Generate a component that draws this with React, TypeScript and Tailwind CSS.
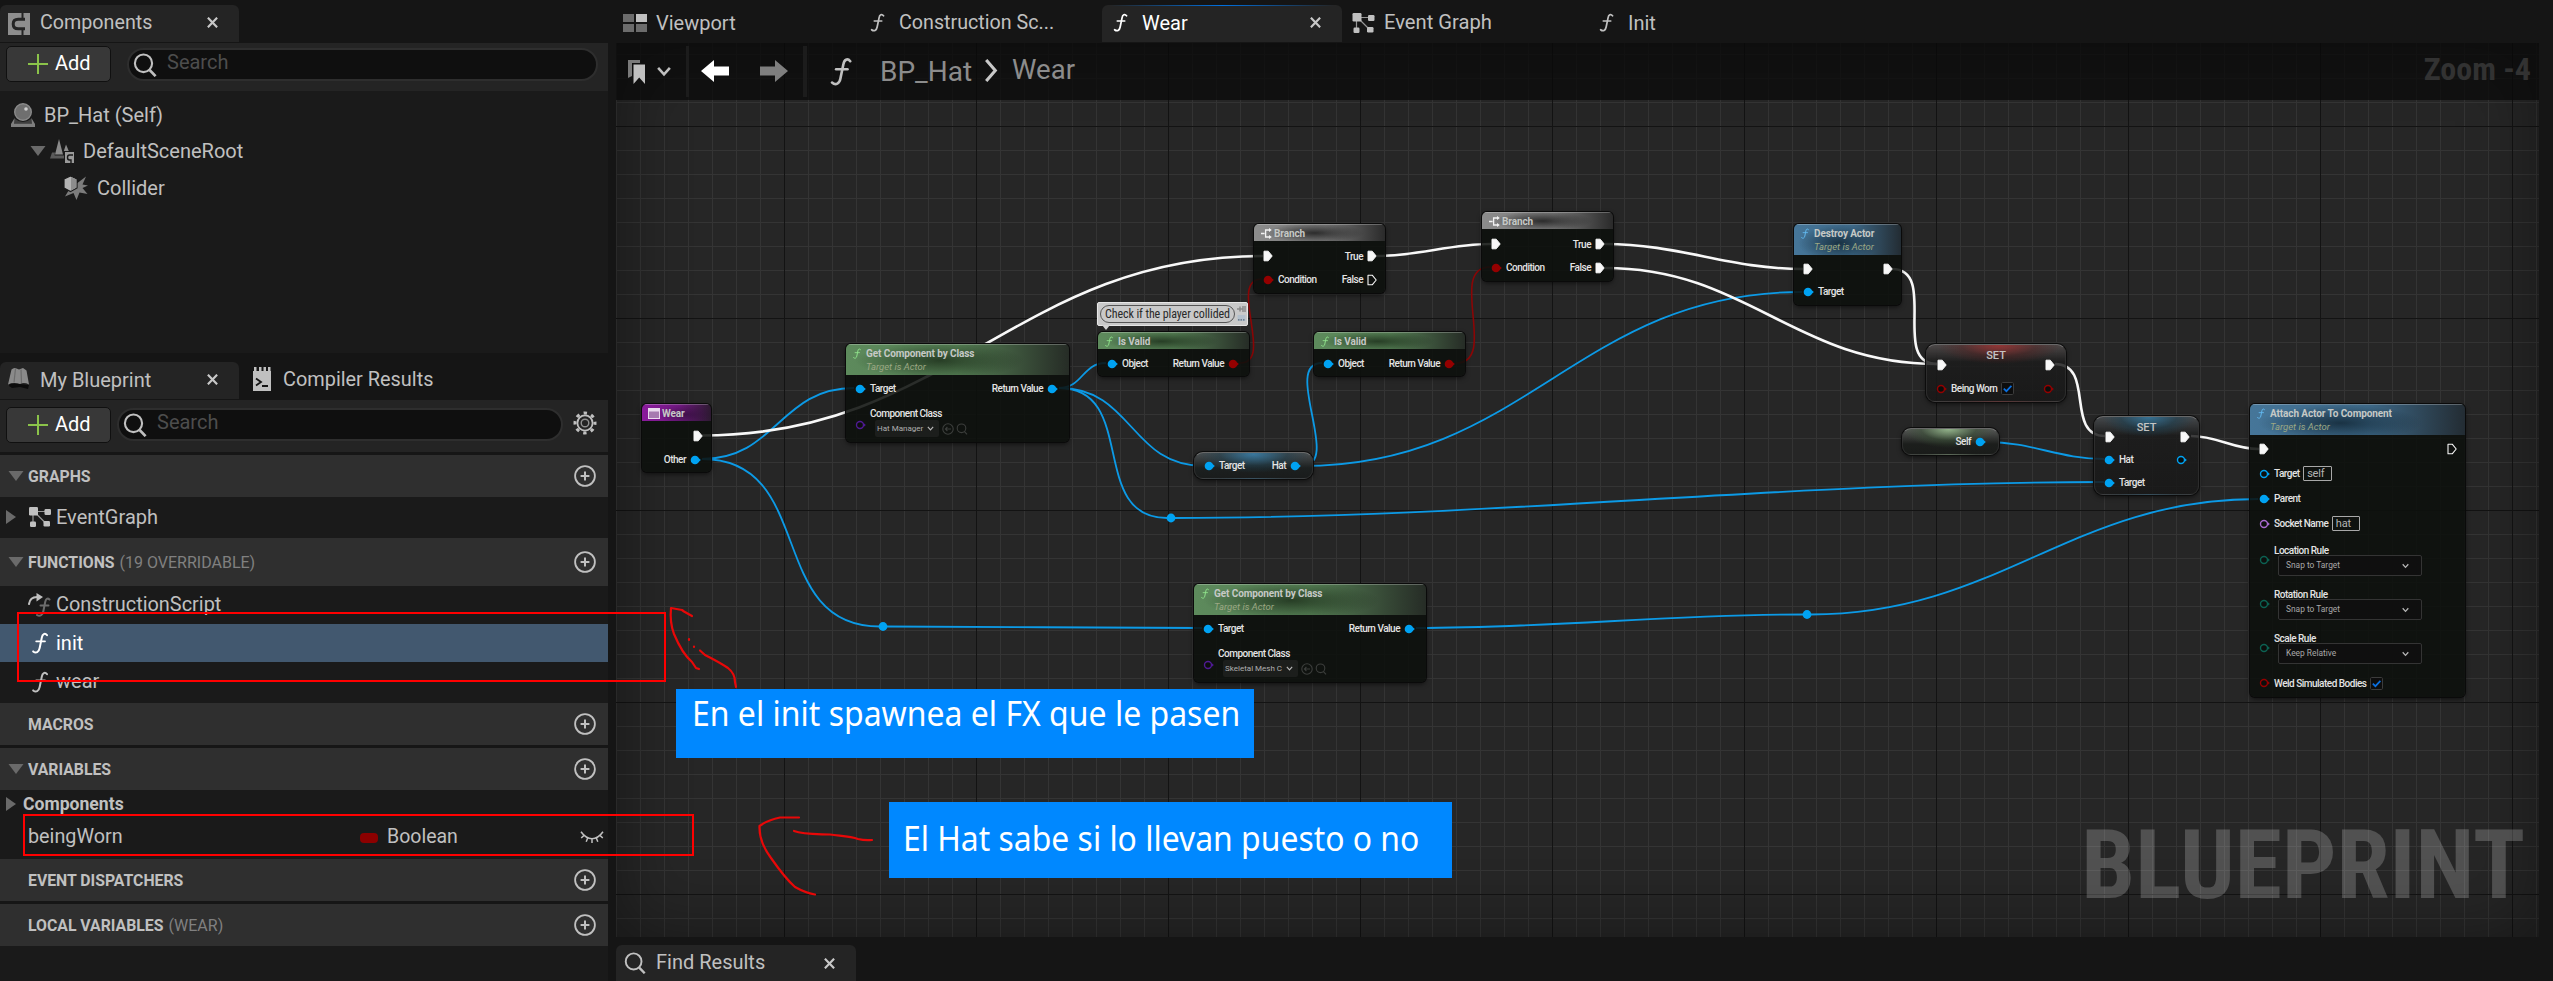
import type { ReactNode } from "react";

/* ---------- icons ---------- */

function FuncIcon({ className = "" }: { className?: string }) {
  return (
    <svg viewBox="0 0 16 22" className={className} fill="none" stroke="currentColor" strokeLinecap="round">
      <path d="M15 3.2C12.9 0.6 10.4 2 9.8 5.6L7.6 16.2C6.9 20.2 4 21.8 1.2 19.4" strokeWidth="2" />
      <path d="M4.2 9.3H13" strokeWidth="1.8" />
    </svg>
  );
}

function SearchIcon({ className = "" }: { className?: string }) {
  return (
    <svg viewBox="0 0 24 24" className={className} fill="none" stroke="currentColor" strokeWidth="2.1">
      <ellipse cx="10.5" cy="10.3" rx="8.6" ry="8.8" />
      <path d="M16.6 17 22.6 23.2" strokeWidth="2.6" />
    </svg>
  );
}

function CloseIcon() {
  return (
    <svg viewBox="0 0 10 10" className="size-[11px] text-[#c8c8c8]" fill="none" stroke="currentColor" strokeWidth="1.9">
      <path d="M0.8 0.6 9.2 9.4M9.2 0.6 0.8 9.4" />
    </svg>
  );
}

function PlusCircle() {
  return (
    <svg viewBox="0 0 22 22" className="size-[22px] text-[#c0c0c0]" fill="none" stroke="currentColor" strokeWidth="1.8">
      <circle cx="11" cy="11" r="9.9" />
      <path d="M11 6.6V15.4M6.6 11H15.4" strokeWidth="2" />
    </svg>
  );
}

function GraphIcon({ className = "" }: { className?: string }) {
  return (
    <svg viewBox="0 0 22 20" className={className} fill="currentColor">
      <rect x="0" y="0" width="9" height="8.5" rx="1.2" />
      <rect x="15.5" y="2" width="6.5" height="6" rx="1.2" />
      <rect x="1" y="14.5" width="6" height="5.5" rx="1.2" />
      <rect x="14.5" y="14" width="6.5" height="5.5" rx="1.2" />
      <path d="M4 8V15M8 4.5H16M8 7.5 16 15.5" stroke="currentColor" strokeWidth="1.2" fill="none" opacity=".75" />
    </svg>
  );
}

function CompIcon() {
  return (
    <svg viewBox="0 0 22 22" className="size-[22px]">
      <path fill="#8e8e8e" d="M0 0H22V22H0Z" />
      <path fill="#242424" d="M13.5 0H15.5V6.5H13.5ZM13.5 15.5H15.5V22H13.5Z" />
      <path fill="none" stroke="#242424" strokeWidth="3" d="M17 6.2H10.2Q5.2 6.2 5.2 11T10.2 15.8H17" />
      <path fill="#8e8e8e" d="M17 0H22V22H17Z" />
    </svg>
  );
}

function Down({ className = "" }: { className?: string }) {
  return (
    <svg viewBox="0 0 16 10" className={className}>
      <path d="M0.5 0H15.5L8 10Z" fill="#6a6a6a" />
    </svg>
  );
}

function RightTri() {
  return (
    <svg viewBox="0 0 10 14" className="h-[14px] w-[10px]">
      <path d="M0 0 10 7 0 14Z" fill="#6a6a6a" />
    </svg>
  );
}

function Chevron({ className = "" }: { className?: string }) {
  return (
    <svg viewBox="0 0 8 6" className={className} fill="none" stroke="currentColor" strokeWidth="1.4">
      <path d="M0.8 1 4 4.6 7.2 1" />
    </svg>
  );
}

/* ---------- left side ---------- */

function AddButton() {
  return (
    <div className="flex h-9 w-[105px] items-center rounded-[5px] border-[1.5px] border-[#101010] bg-[#383838] pl-[21px]">
      <svg viewBox="0 0 20 20" className="size-5" stroke="#8bc34a" strokeWidth="2">
        <path d="M10 0V20M0 10H20" />
      </svg>
      <span className="-mt-0.5 ml-[7px] text-[20px] leading-none text-white">Add</span>
    </div>
  );
}

function SearchBox({ className }: { className: string }) {
  return (
    <div className={`flex h-[33px] items-center rounded-full border-2 border-[#2e2e2e] bg-[#0f0f0f] ${className}`}>
      <SearchIcon className="ml-1 size-6 text-[#c0c0c0]" />
      <span className="-mt-[5px] ml-[10px] text-[20px] leading-none text-[#4d4d4d]">Search</span>
    </div>
  );
}

function Section({ title, note, open, h, gap }: { title: string; note?: string; open?: boolean; h: string; gap?: boolean }) {
  return (
    <div className={`flex shrink-0 items-center bg-[#2f2f2f] pr-3 ${h} ${gap ? "mt-[3px] shadow-[0_-3px_0_#161616]" : ""}`}>
      <div className="flex w-7 pl-2">{open && <Down className="h-[10px] w-4" />}</div>
      <span className="pt-px text-[15.8px] font-bold text-[#c0c0c0]">{title}</span>
      {note && <span className="ml-[5px] pt-px text-[16px] text-[#808080]">{note}</span>}
      <span className="ml-auto">
        <PlusCircle />
      </span>
    </div>
  );
}

function LeftPanels() {
  return (
    <div className="flex w-[608px] shrink-0 flex-col">
      <div className="flex h-[43px] items-end pb-px">
        <div className="flex h-[37px] w-[239px] items-center rounded-t-[6px] bg-[#242424] pl-2">
          <CompIcon />
          <span className="ml-[10px] pb-[2px] text-[19.7px] text-[#c0c0c0]">Components</span>
          <span className="mr-[21px] ml-auto pb-[2px]">
            <CloseIcon />
          </span>
        </div>
      </div>
      <div className="flex h-[48px] items-start bg-[#242424] pt-[3px] pl-[6px]">
        <AddButton />
        <SearchBox className="mt-[2px] ml-4 w-[471px]" />
      </div>
      <div className="flex h-[262px] flex-col bg-[#1a1a1a] pt-[6px] text-[20px] text-[#c0c0c0]">
        <div className="flex h-9 items-center pl-[11px]">
          <svg viewBox="0 0 24 24" className="size-6">
            <circle cx="12" cy="9" r="8.3" fill="#6f6f6f" stroke="#8a8a8a" strokeWidth="1.4" />
            <circle cx="15" cy="6" r="1.8" fill="#d0d0d0" />
            <path d="M3.5 15.5Q12 22.5 20.5 15.5L22 20H2Z" fill="#3f3f3f" />
            <path d="M3.6 15 0 21V24H24V21L20.4 15 21 20.4H3Z" fill="#7e7e7e" />
          </svg>
          <span className="ml-[9px]">BP_Hat (Self)</span>
        </div>
        <div className="flex h-9 items-center pl-[30px]">
          <Down className="h-[10px] w-4" />
          <svg viewBox="0 0 24 24" className="ml-1 size-6">
            <path d="M9 0 13 15.5H5ZM16 5.5 18.8 12H13.8Z" fill="#8a8a8a" />
            <path d="M2 13.5H5L4.6 16.5H14V19.5H0Z" fill="#5a5a5a" />
            <path d="M15 13H24V24H15Z" fill="#9a9a9a" />
            <path d="M23 16H19.5Q17.5 16 17.5 18.5T19.5 21H21V24" fill="none" stroke="#1a1a1a" strokeWidth="1.4" />
          </svg>
          <span className="ml-[9px]">DefaultSceneRoot</span>
        </div>
        <div className="flex h-9 items-center pt-px pl-[64px]">
          <svg viewBox="0 0 24 24" className="size-6">
            <path d="M22 0.5 18.5 8.5 24 9.5 18.5 12 23.5 18 15.5 16.5 12.5 24 9.5 17 1 20.5 5.5 13Z" fill="#7c7c7c" />
            <path d="M6.5 0 13 3V12L6.5 15.5 0 12V3Z" fill="#b4b4b4" stroke="#1a1a1a" strokeWidth="1.2" />
            <path d="M7 1 12.4 3.4V11.6L7 14.6Z" fill="#8d8d8d" />
          </svg>
          <span className="ml-[9px] text-[20px]">Collider</span>
        </div>
      </div>

      <div className="flex h-[47px] items-end pb-px">
        <div className="flex h-[37px] w-[239px] items-center rounded-t-[6px] bg-[#242424] pl-2">
          <svg viewBox="0 0 22 24" className="h-6 w-[22px] -translate-y-0.5">
            <path d="M1 19 4 21 12 20 20 22 21 18 2 16Z" fill="#0c0c0c" />
            <path d="M3.5 2.5Q6 0 8.5 1.5L11 2.5 15 1 18.5 3.5 21 17.5Q16 14.8 12 17 6 14.8 0 17.5Z" fill="#8a8a8a" />
            <path d="M7.5 1.5 6 15.5M13 2.5 13.5 16" stroke="#6c6c6c" strokeWidth="1.2" />
          </svg>
          <span className="ml-[10px] pb-[2px] text-[20px] text-[#c0c0c0]">My Blueprint</span>
          <span className="mr-[21px] ml-auto pb-[2px]">
            <CloseIcon />
          </span>
        </div>
        <div className="flex h-[37px] items-center pl-[14px]">
          <svg viewBox="0 0 18 24" className="h-6 w-[18px] -translate-y-0.5">
            <path d="M0 4H18V24H0Z" fill="#c0c0c0" />
            <path d="M1 0H3.5V5H1ZM6 0H8.5V5H6ZM10.5 0H13V5H10.5ZM15 0H17.5V5H15Z" fill="#c0c0c0" />
            <path d="M3 11.5 8 15 3 18.5M9 19H15" fill="none" stroke="#151515" strokeWidth="1.8" />
          </svg>
          <span className="ml-3 pb-[2px] text-[19.9px] text-[#c0c0c0]">Compiler Results</span>
        </div>
      </div>
      <div className="flex h-[52px] items-start bg-[#242424] pt-[7px] pl-[6px]">
        <AddButton />
        <SearchBox className="mt-[1px] ml-[6px] w-[446px]" />
        <svg viewBox="0 0 24 24" className="mt-[4px] ml-[10px] size-6 text-[#c0c0c0]" fill="none" stroke="currentColor">
          <circle cx="12" cy="12" r="7.6" strokeWidth="1.8" />
          <circle cx="12" cy="12" r="3.8" strokeWidth="1.4" opacity=".7" />
          <circle cx="12" cy="12" r="10" strokeWidth="3" strokeDasharray="3.4 4.454" strokeDashoffset="1.7" />
        </svg>
      </div>
      <div className="flex flex-1 flex-col bg-[#1a1a1a] text-[20px] text-[#c0c0c0]">
        <Section title="GRAPHS" open h="h-[42px]" gap />
        <div className="flex h-[41px] items-center pb-[2px] pl-[6px]">
          <RightTri />
          <GraphIcon className="ml-[13px] h-5 w-[22px]" />
          <span className="ml-[5px]">EventGraph</span>
        </div>
        <Section title="FUNCTIONS" note="(19 OVERRIDABLE)" open h="h-[48px]" />
        <div className="flex h-[38px] items-center pl-[28px]">
          <svg viewBox="0 0 24 24" className="size-6" fill="none" strokeLinecap="round">
            <path d="M1 11Q2 4 9 4" stroke="#c0c0c0" strokeWidth="2" />
            <path d="M8.5 0 15 4 8.5 8.4Z" fill="#c0c0c0" />
            <path d="M21.5 6.5C19.5 4.6 17.8 6 17.2 9L15.4 18C14.8 22 12 24 9 22M12.5 12.5H20.5" stroke="#6c6c6c" strokeWidth="2" />
          </svg>
          <span className="ml-1 text-[19.9px]">ConstructionScript</span>
        </div>
        <div className="flex h-[38px] items-center bg-[#42586f] pl-[32px] text-white">
          <FuncIcon className="h-6 w-4" />
          <span className="ml-2">init</span>
        </div>
        <div className="flex h-[41px] items-start pt-1 pl-[32px]">
          <FuncIcon className="mt-1 h-6 w-4" />
          <span className="ml-2">wear</span>
        </div>
        <Section title="MACROS" h="h-[42px]" />
        <Section title="VARIABLES" open h="h-[42px]" gap />
        <div className="flex h-7 items-center pl-[6px]">
          <RightTri />
          <span className="ml-[7px] text-[17.6px] font-bold">Components</span>
        </div>
        <div className="flex h-[41px] items-center pb-[3px] pl-7">
          <span className="w-[332px] text-[19.8px]">beingWorn</span>
          <span className="h-[10px] w-[18px] translate-y-px rounded-[4px] bg-[#8c0000]" />
          <span className="ml-[9px] text-[19.5px]">Boolean</span>
          <svg viewBox="0 0 24 12" className="mr-1 ml-auto h-3 w-6" fill="none" stroke="#c0c0c0" strokeWidth="1.5">
            <path d="M1 0.8Q6 7.8 12 7.8T23 0.8M12 8V12M7.6 7.2 6.2 10.8M16.4 7.2 17.8 10.8M3.8 4.6 1.2 7M20.2 4.6 22.8 7" />
          </svg>
        </div>
        <Section title="EVENT DISPATCHERS" h="h-[42px]" />
        <Section title="LOCAL VARIABLES" note="(WEAR)" h="h-[42px]" gap />
      </div>
    </div>
  );
}

/* ---------- graph nodes ---------- */

type PinKind = "exec" | "exec-o" | "blue" | "blue-o" | "red" | "red-o" | "violet-o" | "purple-o" | "teal-o";
const pinColors: Record<string, string> = { blue: "#00a2f2", red: "#940000", violet: "#4f1a94", purple: "#a869cf", teal: "#0c6152" };

function Pin({ kind }: { kind: PinKind }) {
  if (kind === "exec" || kind === "exec-o") {
    return (
      <svg viewBox="0 0 10 12" className="h-3 w-[10px] shrink-0">
        <path
          d="M1 1.2H5.2L9.2 6 5.2 10.8H1Z"
          fill={kind === "exec" ? "#f8f8f8" : "#101210"}
          stroke="#f8f8f8"
          strokeWidth={kind === "exec" ? 1 : 1.1}
          strokeLinejoin="round"
        />
      </svg>
    );
  }
  const hollow = kind.endsWith("-o");
  const c = pinColors[kind.replace("-o", "")];
  return (
    <svg viewBox="0 0 12 10" className="h-[10px] w-3 shrink-0">
      <path d="M8.6 3 10.8 5 8.6 7Z" fill={c} />
      <circle cx="5" cy="5" r={hollow ? 3.5 : 4.3} fill={hollow ? "#0c0e0c" : c} stroke={c} strokeWidth={hollow ? 1.4 : 0} />
    </svg>
  );
}

type PinDef = { kind: PinKind; label?: ReactNode };

function Row({ h = "h-[23px]", left, right, pr = "pr-[10px]" }: { h?: string; left?: PinDef; right?: PinDef; pr?: string }) {
  return (
    <div className={`flex items-center justify-between pl-[8.5px] ${h} ${pr}`}>
      <div className="flex items-center gap-[3.5px]">
        {left && <Pin kind={left.kind} />}
        {left?.label}
      </div>
      <div className="flex items-center gap-1">
        {right?.label}
        {right && <Pin kind={right.kind} />}
      </div>
    </div>
  );
}

const L = ({ children }: { children: ReactNode }) => (
  <span className="pt-px text-[10px] leading-3 font-medium tracking-[-0.5px] whitespace-nowrap text-[#e4e4e4]">{children}</span>
);

const headers: Record<string, string> = {
  green:
    "bg-[radial-gradient(ellipse_38%_60%_at_42%_52%,rgba(24,40,22,.75),transparent),linear-gradient(90deg,#5d8a5c_0%,#557f54_50%,#262c26_100%)]",
  blue: "bg-[radial-gradient(ellipse_38%_60%_at_42%_60%,rgba(16,36,50,.8),transparent),linear-gradient(90deg,#467699_0%,#3d6887_55%,#232c33_100%)]",
  grey: "bg-[radial-gradient(ellipse_38%_60%_at_46%_50%,rgba(24,24,24,.8),transparent),linear-gradient(90deg,#8c8c8c_0%,#777777_55%,#2a2a2a_100%)]",
  purple: "bg-[radial-gradient(ellipse_40%_60%_at_62%_60%,rgba(40,10,50,.6),transparent),linear-gradient(90deg,#8a1b9c_0%,#701880_55%,#2c1a30_100%)]",
};

type NodeProps = { x: number; y: number; w: number; h: number; color: string; icon: ReactNode; title: string; sub?: string; pad?: string; children?: ReactNode };

function Node({ x, y, w, h, color, icon, title, sub, pad = "pt-[3px]", children }: NodeProps) {
  return (
    <div
      className="absolute flex flex-col overflow-hidden rounded-[5px] bg-[rgba(13,16,13,.88)] shadow-[0_0_0_1px_#0a0a0a,0_2px_5px_rgba(0,0,0,.6)]"
      style={{ left: x, top: y, width: w, height: h }}
    >
      <div
        className={`flex shrink-0 items-start border-t border-white/25 pl-[7px] ${headers[color]} ${sub ? "h-[31px] pt-[2px]" : "h-[17px] pt-[1.5px]"}`}
      >
        <span className="flex h-[13px] w-[13px] items-center">{icon}</span>
        <div className="flex flex-col">
          <span className="text-[10px] leading-[13px] font-bold tracking-[-0.1px] whitespace-nowrap text-[#c6c9c6]">{title}</span>
          {sub && <span className="text-[9.5px] leading-[14px] whitespace-nowrap text-[#9ca884] italic">{sub}</span>}
        </div>
      </div>
      <div className={`flex flex-col ${pad}`}>{children}</div>
    </div>
  );
}

function Pill({ x, y, w, h, glow, pad = "", title, children }: { x: number; y: number; w: number; h: number; glow: string; pad?: string; title?: string; children: ReactNode }) {
  return (
    <div
      className={`absolute flex flex-col rounded-[9px] border border-x-[#3a3a3a]/60 border-t-[#8a8a8a]/70 border-b-[#3a3a3a]/60 shadow-[0_0_0_1px_#0c0c0c,0_2px_5px_rgba(0,0,0,.6)] ${glow} ${pad}`}
      style={{ left: x, top: y, width: w, height: h }}
    >
      {title && <span className="h-[13px] text-center text-[11px] leading-[13px] font-medium text-[#c4c4c4]">{title}</span>}
      {children}
    </div>
  );
}

function FIcon({ blue }: { blue?: boolean }) {
  return <FuncIcon className={`h-[11px] w-2 ${blue ? "text-[#62b8ee]" : "text-[#8ee08a]"}`} />;
}

function BranchIcon() {
  return (
    <svg viewBox="0 0 11 11" className="h-[11px] w-[11px]" fill="none" stroke="#f2f2f2" strokeWidth="1.3">
      <path d="M0 5.5H3.6M9 2H4.6V9H9" />
      <path d="M8 0 10.8 2 8 4ZM8 7 10.8 9 8 11Z" fill="#f2f2f2" stroke="none" />
    </svg>
  );
}

function ClassPicker({ value }: { value: string }) {
  return (
    <div className="mt-[3px] flex h-[33px] items-start pl-[8.5px]">
      <span className="mt-[13px] flex">
        <Pin kind="violet-o" />
      </span>
      <div className="ml-[3.5px] flex flex-col">
        <L>Component Class</L>
        <div className="flex items-center pl-[5px]">
          <span className="flex h-[17px] items-center rounded-[2px] bg-[#1c1e1c] pr-[5px] pl-[2px] text-[8px] whitespace-nowrap text-[#b0b0b0]">
            {value}
            <Chevron className="ml-[4px] h-[5px] w-[7px] text-[#b8b8b8]" />
          </span>
          <svg viewBox="0 0 26 12" className="ml-[3px] h-3 w-[26px]" fill="none" stroke="#3c3e3c" strokeWidth="1.1">
            <circle cx="6" cy="6" r="5.2" />
            <path d="M9 6H3.4M5.4 4 3.4 6 5.4 8" />
            <circle cx="19.5" cy="5.3" r="4.3" />
            <path d="M22.5 8.6 25 11.4" />
          </svg>
        </div>
      </div>
    </div>
  );
}

function Rule({ label, value }: { label: string; value: string }) {
  return (
    <div className="flex h-11 items-start pl-[8.5px]">
      <span className="mt-[11px] flex">
        <Pin kind="teal-o" />
      </span>
      <div className="ml-[3.5px] flex flex-col">
        <L>{label}</L>
        <div className="-mt-[2px] ml-1 flex h-[21px] w-[144px] items-center justify-between rounded-[2px] border border-[#343434] bg-[#0f0f0f] pr-[12px] pl-[7px] text-[8.4px] text-[#a8a8a8]">
          {value}
          <Chevron className="h-[6px] w-[7px] text-[#b8b8b8]" />
        </div>
      </div>
    </div>
  );
}

function Check() {
  return (
    <svg viewBox="0 0 13 13" className="size-[13px]">
      <rect x=".5" y=".5" width="12" height="12" rx="1.2" fill="#0d0d0d" stroke="#3c3c3c" />
      <path d="M2.8 6.6 5.4 9.2 10.4 3.8" fill="none" stroke="#0a6fe0" strokeWidth="1.7" />
    </svg>
  );
}

function ValueBox({ children, w }: { children: ReactNode; w: string }) {
  return (
    <span className={`flex h-[15px] items-center rounded-[1px] border border-[#a8a8a8] pl-[3px] text-[11px] leading-none tracking-[-0.2px] text-[#b4b4b4] ${w}`}>
      {children}
    </span>
  );
}

function wire(x1: number, y1: number, x2: number, y2: number) {
  const c = (Math.abs(x2 - x1) + Math.abs(y2 - y1)) / 3;
  return `M${x1} ${y1}C${x1 + c} ${y1} ${x2 - c} ${y2} ${x2} ${y2}`;
}

const execWires = [
  wire(702, 435.5, 1263, 256),
  wire(1377, 256, 1491, 244),
  wire(1605, 244, 1803, 269),
  wire(1605, 268, 1937, 364),
  wire(1892, 269, 1937, 364),
  wire(2055, 364, 2105, 436),
  wire(2191, 436, 2259, 449),
];
const dataWires = [
  wire(702, 459, 854, 388),
  wire(702, 459, 880, 626.5),
  wire(886, 626.5, 1202, 628),
  wire(1059, 388, 1106, 363),
  wire(1059, 388, 1204, 466),
  wire(1059, 388, 1167, 518),
  wire(1174, 518, 2104, 482),
  wire(1302, 466, 1322, 363),
  wire(1302, 466, 1802, 292),
  wire(1416, 628, 1804, 614.5),
  wire(1811, 614.5, 2258, 499),
  wire(1987, 442, 2104, 459),
];
const boolWires = [wire(1240, 363, 1262, 279), wire(1456, 363, 1490, 267)];

function Branch({ x, y, falseOut }: { x: number; y: number; falseOut: PinKind }) {
  return (
    <Node x={x} y={y} w={131} h={69} color="grey" icon={<BranchIcon />} title="Branch">
      <Row h="h-[24px]" pr="pr-[8px]" left={{ kind: "exec" }} right={{ kind: "exec", label: <L>True</L> }} />
      <Row h="h-[23px]" pr="pr-[8px]" left={{ kind: "red", label: <L>Condition</L> }} right={{ kind: falseOut, label: <L>False</L> }} />
    </Node>
  );
}

function Graph() {
  return (
    <div className="absolute -top-[43px] -left-[616px] h-[981px] w-[2553px]">
      <svg viewBox="0 0 2553 981" className="absolute inset-0 h-full w-full" fill="none">
        <g stroke="#0c9ae6" strokeWidth="1.8">
          {dataWires.map((d) => (
            <path key={d} d={d} />
          ))}
        </g>
        <g stroke="#8a0606" strokeWidth="1.6">
          {boolWires.map((d) => (
            <path key={d} d={d} />
          ))}
        </g>
        <g stroke="#f8f8f8" strokeWidth="2.6">
          {execWires.map((d) => (
            <path key={d} d={d} />
          ))}
        </g>
        <g fill="#00a2f2">
          <circle cx="883" cy="626.5" r="4.4" />
          <circle cx="1171" cy="518" r="4.4" />
          <circle cx="1807" cy="614.5" r="4.4" />
        </g>
      </svg>

      <Node
        x={642} y={404} w={69} h={68} color="purple" title="Wear"
        icon={
          <svg viewBox="0 0 12 11" className="-ml-px h-[11px] w-3">
            <rect x=".5" y=".5" width="11" height="10" fill="#a77ab0" stroke="#ead9ee" />
            <path d="M0 0H12V3.4H0Z" fill="#ead9ee" />
          </svg>
        }
      >
        <Row h="h-[24px]" pr="pr-[8px]" right={{ kind: "exec" }} />
        <Row h="h-[23px]" pr="pr-[9px]" right={{ kind: "blue", label: <L>Other</L> }} />
      </Node>

      <Node x={846} y={344} w={223} h={98} color="green" icon={<FIcon />} title="Get Component by Class" sub="Target is Actor" pad="pt-[2px]">
        <Row left={{ kind: "blue", label: <L>Target</L> }} right={{ kind: "blue", label: <L>Return Value</L> }} />
        <div className="pt-[4px]">
          <ClassPicker value="Hat Manager" />
        </div>
      </Node>

      <Node x={1194} y={584} w={232} h={98} color="green" icon={<FIcon />} title="Get Component by Class" sub="Target is Actor" pad="pt-[2px]">
        <Row left={{ kind: "blue", label: <L>Target</L> }} right={{ kind: "blue", label: <L>Return Value</L> }} />
        <div className="pt-[4px]">
          <ClassPicker value="Skeletal Mesh C" />
        </div>
      </Node>

      <Branch x={1254} y={224} falseOut="exec-o" />
      <Branch x={1482} y={212} falseOut="exec" />

      <Node x={1098} y={332} w={151} h={44} color="green" icon={<FIcon />} title="Is Valid">
        <Row pr="pr-[9px]" left={{ kind: "blue", label: <L>Object</L> }} right={{ kind: "red", label: <L>Return Value</L> }} />
      </Node>
      <Node x={1314} y={332} w={151} h={44} color="green" icon={<FIcon />} title="Is Valid">
        <Row pr="pr-[9px]" left={{ kind: "blue", label: <L>Object</L> }} right={{ kind: "red", label: <L>Return Value</L> }} />
      </Node>

      <div className="absolute top-[302px] left-[1097px] flex h-6 w-[151px] items-center rounded-[2px] border border-[#e6e6e6] bg-[#c9c9c9] pl-[2px]">
        <span className="flex h-[18px] w-[135px] items-center justify-center rounded-full border border-[#555] text-[12px] leading-none tracking-[-0.1px] whitespace-nowrap text-[#2a2a2a] [font-family:'Roboto_Condensed',Roboto,sans-serif]">
          Check if the player collided
        </span>
        <svg viewBox="0 0 9 18" className="ml-[2px] h-[18px] w-[9px]">
          <path d="M0 4H3M3 1.6V6.6M3 4H6M6 1V7M8 1V7" stroke="#8a8a8a" strokeWidth="1.5" />
          <path d="M0.5 10H8.5V16H0.5Z" fill="#b3c0cc" />
          <path d="M1 14.8H8" stroke="#5a6a7a" strokeWidth="1.3" strokeDasharray="1.5 1" />
        </svg>
      </div>
      <svg viewBox="0 0 8 5" className="absolute top-[325px] left-[1102px] h-[5px] w-2">
        <path d="M0 0H8L4 5Z" fill="#d4d4d4" />
      </svg>

      <Pill x={1194} y={452} w={119} h={27} pad="justify-center"
        glow="bg-[radial-gradient(ellipse_48%_75%_at_50%_5%,rgba(54,130,176,.8),rgba(30,64,80,.5)_60%,transparent),linear-gradient(180deg,#4a4e50_0%,#1c2020_60%,#1a1c1c_100%)]">
        <Row left={{ kind: "blue", label: <L>Target</L> }} right={{ kind: "blue", label: <L>Hat</L> }} />
      </Pill>
      <Pill x={1902} y={428} w={97} h={27} pad="justify-center"
        glow="bg-[radial-gradient(ellipse_48%_75%_at_48%_0%,rgba(158,196,148,.85),rgba(60,84,56,.5)_60%,transparent),linear-gradient(180deg,#565856_0%,#1c1e1c_60%,#1a1c1a_100%)]">
        <Row pr="pr-[11px]" right={{ kind: "blue", label: <L>Self</L> }} />
      </Pill>

      <Node x={1794} y={224} w={107} h={81} color="blue" icon={<FIcon blue />} title="Destroy Actor" sub="Target is Actor" pad="pt-[2px]">
        <Row pr="pr-[8px]" left={{ kind: "exec" }} right={{ kind: "exec" }} />
        <Row left={{ kind: "blue", label: <L>Target</L> }} />
      </Node>

      <Pill x={1926} y={344} w={140} h={58} title="SET" pad="pt-[4px]"
        glow="bg-[radial-gradient(ellipse_45%_34%_at_52%_0%,rgba(160,50,50,.85),rgba(90,30,30,.4)_60%,transparent),linear-gradient(180deg,#4c4848_0%,rgba(28,28,28,.85)_30%,rgba(24,24,24,.85)_100%)]">
        <div className="-mt-[9px] pl-px">
          <Row h="h-[23px]" pr="pr-[10px]" left={{ kind: "exec" }} right={{ kind: "exec" }} />
        </div>
        <Row h="h-[26px]" left={{ kind: "red-o", label: <><L>Being Worn</L><Check /></> }} right={{ kind: "red-o" }} />
      </Pill>

      <Pill x={2094} y={416} w={105} h={79} title="SET" pad="pt-[4px]"
        glow="bg-[radial-gradient(ellipse_45%_26%_at_52%_0%,rgba(50,120,160,.85),rgba(26,66,86,.5)_60%,transparent),linear-gradient(180deg,#46494c_0%,rgba(28,28,28,.85)_24%,rgba(24,24,24,.85)_100%)]">
        <div className="-mt-[9px] pl-px">
          <Row h="h-[23px]" pr="pr-[8px]" left={{ kind: "exec" }} right={{ kind: "exec" }} />
        </div>
        <Row left={{ kind: "blue", label: <L>Hat</L> }} right={{ kind: "blue-o" }} />
        <Row left={{ kind: "blue", label: <L>Target</L> }} />
      </Pill>

      <Node x={2250} y={404} w={215} h={293} color="blue" icon={<FIcon blue />} title="Attach Actor To Component" sub="Target is Actor" pad="pt-[2px]">
        <Row h="h-[24px]" pr="pr-[8px]" left={{ kind: "exec" }} right={{ kind: "exec-o" }} />
        <Row h="h-[25px]" left={{ kind: "blue-o", label: <><L>Target</L><ValueBox w="w-[29px]">self</ValueBox></> }} />
        <Row h="h-[25px]" left={{ kind: "blue", label: <L>Parent</L> }} />
        <Row h="h-[25px]" left={{ kind: "purple-o", label: <><L>Socket Name</L><ValueBox w="w-[28px]">hat</ValueBox></> }} />
        <div className="flex flex-col pt-[8px]">
          <Rule label="Location Rule" value="Snap to Target" />
          <Rule label="Rotation Rule" value="Snap to Target" />
          <Rule label="Scale Rule" value="Keep Relative" />
        </div>
        <Row h="h-[14px]" left={{ kind: "red-o", label: <><L>Weld Simulated Bodies</L><Check /></> }} />
      </Node>
    </div>
  );
}

/* ---------- right side ---------- */

function GraphTab({ w, icon, label, active, pl, size = "text-[20px]" }: { w: string; icon: ReactNode; label: string; active?: boolean; pl: string; size?: string }) {
  return (
    <div className={`flex h-[37px] shrink-0 flex-col rounded-t-[6px] ${w} ${active ? "bg-[#242424] text-white" : "text-[#c0c0c0]"}`}>
      <div className={`mx-2 h-px ${active ? "bg-gradient-to-r from-transparent via-[#0070e0] to-transparent" : ""}`} />
      <div className={`flex flex-1 items-center pb-[3px] ${pl}`}>
        {icon}
        <span className={`whitespace-nowrap ${size}`}>{label}</span>
        {active && (
          <span className="mr-[21px] ml-auto">
            <CloseIcon />
          </span>
        )}
      </div>
    </div>
  );
}

function Toolbar() {
  return (
    <div className="absolute inset-x-0 top-0 flex h-[57px] items-center bg-[rgba(9,9,9,.74)] text-[27px] text-[#8c8c8c]">
      <svg viewBox="0 0 18 24" className="ml-[12px] h-6 w-[18px]">
        <path d="M0 0H12V3H4V16L0 18Z" fill="#7a7a7a" />
        <path d="M5.5 4.5H17V24L11.2 17.5 5.5 24Z" fill="#c0c0c0" />
      </svg>
      <Chevron className="ml-[10px] h-[11px] w-[16px] text-[#c0c0c0]" />
      <span className="ml-[14px] h-[51px] w-[3px] bg-[#1c1c1c]" />
      <svg viewBox="0 0 28 22" className="ml-[12px] h-[22px] w-[28px] -translate-y-px">
        <path d="M0 11 13 0V6.5H28V15.5H13V22Z" fill="#fff" />
      </svg>
      <svg viewBox="0 0 28 22" className="ml-[31px] h-[22px] w-[28px] -translate-y-px">
        <path d="M28 11 15 0V6.5H0V15.5H15V22Z" fill="#7f7f7f" />
      </svg>
      <span className="ml-[15px] h-[51px] w-[4px] bg-[#1c1c1c]" />
      <FuncIcon className="ml-[22px] h-[29px] w-6 text-[#c0c0c0]" />
      <span className="ml-[27px] text-[28px]">BP_Hat</span>
      <svg viewBox="0 0 14 24" className="ml-[12px] h-[23px] w-[14px] -translate-y-px" fill="none" stroke="#c8c8c8" strokeWidth="3.2">
        <path d="M2 1 11.5 12 2 23" />
      </svg>
      <span className="-mt-[3px] ml-[14px] text-[27.5px]">Wear</span>
      <span className="mr-[8px] ml-auto pb-[5px] text-[32px] font-bold text-[#323232] [font-family:'Roboto_Condensed',Roboto,sans-serif]">Zoom -4</span>
    </div>
  );
}

function RightSide() {
  return (
    <div className="flex min-w-0 flex-1 flex-col">
      <div className="flex h-[43px] items-end pb-px">
        <GraphTab
          w="w-[243px]" pl="pl-[7px]" label="Viewport"
          icon={
            <svg viewBox="0 0 24 18" className="mr-[9px] h-[18px] w-6">
              <path d="M0 0H11V8H0ZM0 10H11V18H0ZM13 10H24V18H13Z" fill="#6c6c6c" />
              <path d="M13 0H24V8H13Z" fill="#c0c0c0" />
            </svg>
          }
        />
        <GraphTab w="w-[243px]" pl="pl-[10px]" size="text-[19.7px]" label="Construction Sc..." icon={<FuncIcon className="mr-[13px] h-[19px] w-[17px]" />} />
        <GraphTab w="w-[240px]" pl="pl-[10px]" label="Wear" active icon={<FuncIcon className="mr-[13px] h-[19px] w-[17px]" />} />
        <GraphTab w="w-[245px]" pl="pl-[10px]" label="Event Graph" size="text-[20.2px]" icon={<GraphIcon className="mr-[9px] h-5 w-[23px]" />} />
        <GraphTab w="w-[240px]" pl="pl-[11px]" label="Init" icon={<FuncIcon className="mr-[13px] h-[19px] w-[17px]" />} />
      </div>
      <div className="relative h-[894px] w-[1923px] overflow-hidden bg-[#262626]">
        <div className="absolute inset-0 bg-[linear-gradient(90deg,#343434_1px,transparent_1px),linear-gradient(180deg,#343434_1px,transparent_1px)] bg-[length:24px_24px] bg-[position:0_11px]" />
        <div className="absolute inset-0 bg-[linear-gradient(90deg,#131313_1px,transparent_1px),linear-gradient(180deg,#131313_1px,transparent_1px)] bg-[length:192px_192px] bg-[position:168px_83px]" />
        <div className="absolute inset-0 shadow-[inset_0_0_70px_rgba(0,0,0,.42)]" />
        <Graph />
        <Toolbar />
        <div className="absolute right-[14px] bottom-[16px] text-[96px] leading-[112px] font-bold text-white/[.2] [font-family:'Roboto_Condensed',Roboto,sans-serif]">
          BLUEPRINT
        </div>
      </div>
      <div className="flex flex-1 items-end">
        <div className="flex h-9 w-[240px] items-center rounded-t-[6px] bg-[#242424] pl-2">
          <SearchIcon className="h-[22px] w-[22px] text-[#c0c0c0]" />
          <span className="ml-[10px] pb-[2px] text-[20px] text-[#c0c0c0]">Find Results</span>
          <span className="mr-[21px] ml-auto">
            <CloseIcon />
          </span>
        </div>
      </div>
    </div>
  );
}

/* ---------- notes drawn over the editor ---------- */

function Annotations() {
  return (
    <>
      <div className="absolute top-[612px] left-[17px] h-[70px] w-[649px] border-2 border-[#ff0000]" />
      <div className="absolute top-[814px] left-[23px] h-[42px] w-[671px] border-2 border-[#ff0000]" />
      <div className="absolute top-[689px] left-[676px] h-[69px] w-[578px] bg-[#0088ff] pl-[16px]">
        <span className="block origin-left scale-x-[.914] text-[35px] leading-[47px] whitespace-nowrap text-white [font-family:'Noto_Sans',sans-serif]">
          En el init spawnea el FX que le pasen
        </span>
      </div>
      <div className="absolute top-[802px] left-[889px] flex h-[76px] w-[563px] items-center bg-[#0088ff] pb-[4px] pl-[14px]">
        <span className="block origin-left scale-x-[.911] text-[35px] leading-[48px] whitespace-nowrap text-white [font-family:'Noto_Sans',sans-serif]">
          El Hat sabe si lo llevan puesto o no
        </span>
      </div>
      <svg viewBox="0 0 2553 981" className="pointer-events-none absolute inset-0 h-full w-full" fill="none" stroke="#e80808" strokeWidth="2.2" strokeLinecap="round" strokeLinejoin="round">
        <path d="M692 616 684 611.5 682 610 671 608C670 618 671 626 674 634C679 646 685 656 692 662L696 668 699 669" />
        <path d="M689 639V640M694 646.5V647M700 650.5 705 655C713 659 722 664 728 668C733 672 735 676 735 682L736 687" />
        <path d="M799 817.5H780C773 819 765 822 759.5 826C759 838 765 850 771 858C778 868 787 880 795 887C802 891 807 893 815 894.5" />
        <path d="M794 831C803 834.5 815 834 830 834.5C840 836 850 836 858 839C862 840 866 840.5 872 840" />
      </svg>
    </>
  );
}

export default function App() {
  return (
    <div className="relative flex h-[981px] w-[2553px] gap-2 overflow-hidden bg-[#151515] [font-family:Roboto,sans-serif]">
      <LeftPanels />
      <RightSide />
      <Annotations />
    </div>
  );
}
